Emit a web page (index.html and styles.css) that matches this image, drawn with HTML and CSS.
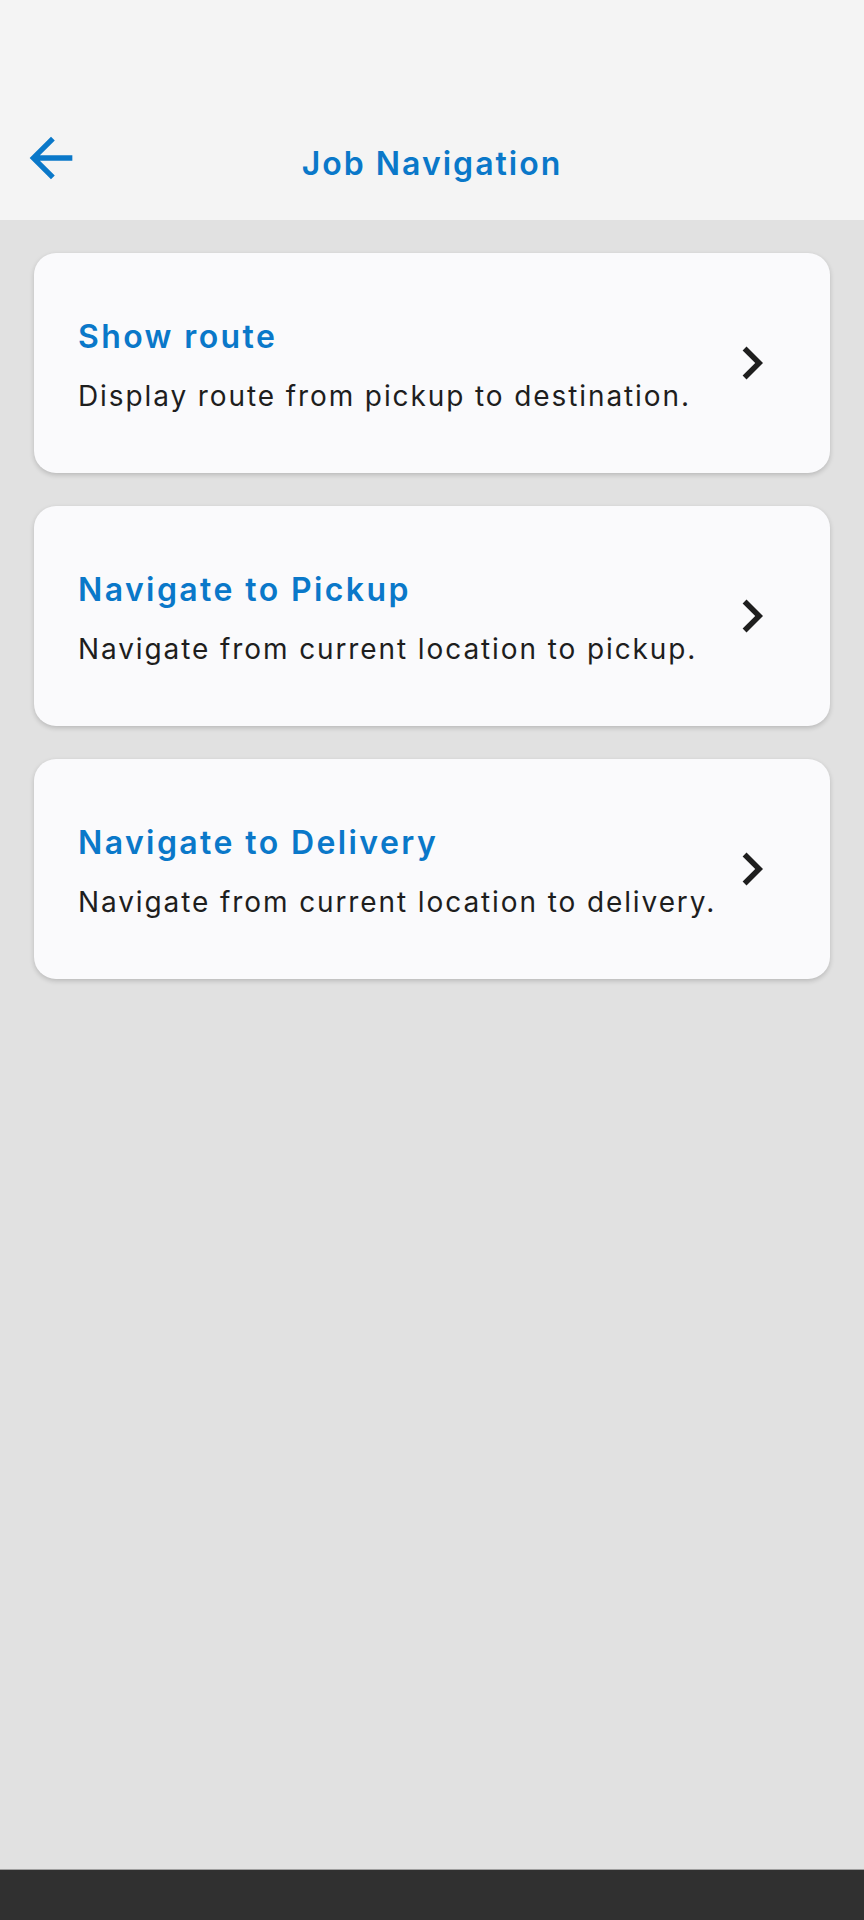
FILE: index.html
```html
<!DOCTYPE html>
<html lang="en">
<head>
    <meta charset="UTF-8">
    <meta name="viewport" content="width=device-width, initial-scale=1.0">
    <title>Job Navigation</title>
    <link rel="stylesheet" href="styles.css">
</head>
<body>
    <div class="app">
        <div class="topbar">
            <div class="toolbar">
                <button class="back-button" aria-label="Back">
                    <svg viewBox="0 0 24 24" width="64" height="64">
                        <path d="M20 11H7.83l5.59-5.59L12 4l-8 8 8 8 1.41-1.41L7.83 13H20v-2z"/>
                    </svg>
                </button>
                <h1>Job Navigation</h1>
            </div>
        </div>

        <div class="container">
            <div class="nav-card">
                <div class="card-text">
                    <h2>Show route</h2>
                    <p>Display route from pickup to destination.</p>
                </div>
                <svg class="chevron" viewBox="0 0 24 24" width="66" height="66">
                    <path d="M10 6L8.59 7.41 13.17 12l-4.58 4.59L10 18l6-6z"/>
                </svg>
            </div>
            <div class="nav-card">
                <div class="card-text">
                    <h2>Navigate to Pickup</h2>
                    <p>Navigate from current location to pickup.</p>
                </div>
                <svg class="chevron" viewBox="0 0 24 24" width="66" height="66">
                    <path d="M10 6L8.59 7.41 13.17 12l-4.58 4.59L10 18l6-6z"/>
                </svg>
            </div>
            <div class="nav-card">
                <div class="card-text">
                    <h2>Navigate to Delivery</h2>
                    <p>Navigate from current location to delivery.</p>
                </div>
                <svg class="chevron" viewBox="0 0 24 24" width="66" height="66">
                    <path d="M10 6L8.59 7.41 13.17 12l-4.58 4.59L10 18l6-6z"/>
                </svg>
            </div>
        </div>

        <div class="navbar"></div>
    </div>
</body>
</html>
```

FILE: styles.css
```css
body {
    margin: 0;
    font-family: Inter, 'Open Sans', sans-serif;
    background-color: #e1e1e1;
}

.app {
    display: flex;
    flex-direction: column;
    height: 1920px;
}

.topbar {
    height: 220px;
    background-color: #f4f4f4;
    display: flex;
    flex-direction: column;
    justify-content: flex-end;
}

.toolbar {
    position: relative;
    height: 128px;
    display: flex;
    align-items: center;
    justify-content: center;
}

.back-button {
    position: absolute;
    left: 19px;
    top: 34px;
    padding: 0;
    border: none;
    background: none;
    display: flex;
}

.back-button svg {
    fill: #0a78c9;
}

.toolbar h1 {
    margin: 0;
    margin-top: 14px;
    font-size: 32px;
    font-weight: 600;
    letter-spacing: 2px;
    color: #0a78c9;
}

.container {
    flex: 1;
    display: flex;
    flex-direction: column;
    gap: 33px;
    padding: 33px 34px;
}

.nav-card {
    height: 220px;
    box-sizing: border-box;
    background-color: #fafafc;
    border-radius: 22px;
    box-shadow: 0 2px 5px rgba(0, 0, 0, 0.18);
    display: flex;
    align-items: center;
    padding: 6px 45px 0 44px;
}

.card-text {
    flex: 1;
}

.card-text h2 {
    margin: 0 0 24px;
    font-size: 32px;
    font-weight: 600;
    letter-spacing: 2.4px;
    color: #0a78c9;
    line-height: 1.2;
}

.card-text p {
    margin: 0;
    font-size: 28px;
    letter-spacing: 1.9px;
    color: #1e1e1e;
    line-height: 1.2;
}

.chevron {
    fill: #1e1e1e;
    margin-top: -6px;
}

.navbar {
    height: 50px;
    background-color: #303030;
    border-top: 1px solid #9e9e9e;
}
```
